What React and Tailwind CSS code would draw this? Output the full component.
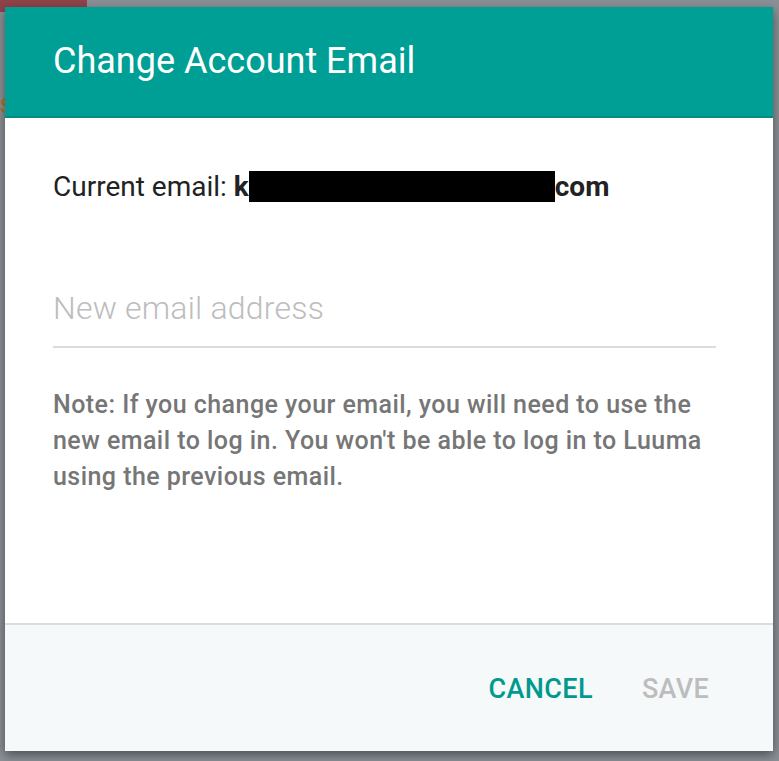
export default function App() {
  return (
    <div className="relative w-[779px] h-[761px] overflow-hidden bg-[#8b9096]" style={{ fontFamily: "Roboto, 'Noto Sans', sans-serif" }}>
      <div className="absolute left-0 top-0 w-[87px] h-[12px] bg-[#8f4249] rounded-br-[6px]" />
      <div className="absolute left-0 top-[96px] text-[20px] font-bold text-[#b8732a] leading-none">S</div>
      <div className="absolute left-[5px] top-[7px] w-[768px] h-[744px] flex flex-col bg-white shadow-[0_4px_10px_rgba(0,0,0,0.45)]">
        <div className="h-[111px] bg-[#009f96] border-b-2 border-[#008c83] flex items-center px-12">
          <h1 className="text-[36px] text-white leading-none pb-[2px]">Change Account Email</h1>
        </div>
        <div className="flex-1 px-12 pt-[53px]">
          <div className="text-[28px] text-[#222] leading-[30px] flex items-center">
            <span>Current email:&nbsp;</span>
            <span className="font-bold">k</span>
            <span className="inline-block w-[306px] h-[31px] bg-black" />
            <span className="font-bold">com</span>
          </div>
          <div className="mt-[86px] border-b-2 border-[#dcdcdc] h-[60px] w-[663px] text-[32px] text-[#bdbdbd] leading-[40px] tracking-[0.2px]" style={{ fontWeight: 300 }}>
            New email address
          </div>
          <p className="mt-[39px] text-[25px] leading-[36px] text-[#767676] font-medium w-[670px] tracking-[0.45px]">
            Note: If you change your email, you will need to use the new email to log in. You won't be able to log in to Luuma using the previous email.
          </p>
        </div>
        <div className="h-[128px] border-t-2 border-[#d9dde0] bg-[#f5f9f9] flex items-center justify-end pr-[64px] gap-[49px] pt-[2px]">
          <span className="text-[27px] font-medium text-[#00998f] tracking-[0.4px]">CANCEL</span>
          <span className="text-[27px] font-medium text-[#bdbdbd] tracking-[0.3px]">SAVE</span>
        </div>
      </div>
    </div>
  );
}
